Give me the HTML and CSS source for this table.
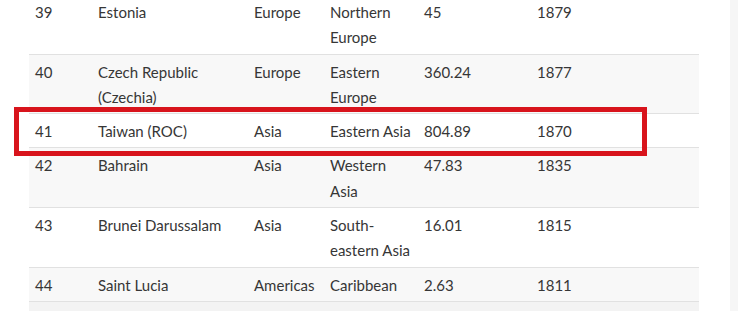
FILE: index.html
```html
<!DOCTYPE html>
<html>
<head>
<meta charset="utf-8">
<link rel="stylesheet" href="styles.css">
</head>
<body>
<div class="page">
  <main class="main">
    <table class="countries">
      <colgroup>
        <col class="c-rank"><col class="c-name"><col class="c-region"><col class="c-sub"><col class="c-density"><col class="c-year">
      </colgroup>
      <tbody>
        <tr><td>39</td><td>Estonia</td><td>Europe</td><td>Northern Europe</td><td>45</td><td>1879</td></tr>
        <tr class="alt"><td>40</td><td>Czech Republic (Czechia)</td><td>Europe</td><td>Eastern Europe</td><td>360.24</td><td>1877</td></tr>
        <tr><td>41</td><td>Taiwan (ROC)</td><td>Asia</td><td>Eastern Asia</td><td>804.89</td><td>1870</td></tr>
        <tr class="alt"><td>42</td><td>Bahrain</td><td>Asia</td><td>Western Asia</td><td>47.83</td><td>1835</td></tr>
        <tr><td>43</td><td>Brunei Darussalam</td><td>Asia</td><td>South-eastern Asia</td><td>16.01</td><td>1815</td></tr>
        <tr class="alt"><td>44</td><td>Saint Lucia</td><td>Americas</td><td>Caribbean</td><td>2.63</td><td>1811</td></tr>
        <tr class="next"><td>&nbsp;</td><td></td><td></td><td></td><td></td><td></td></tr>
      </tbody>
    </table>
    <div class="highlight"></div>
  </main>
  <aside class="edge"></aside>
</div>
</body>
</html>
```

FILE: styles.css
```css
html, body {
  margin: 0;
  padding: 0;
  background: #ffffff;
  overflow: hidden;
}
.page {
  display: flex;
  width: 738px;
  height: 311px;
  overflow: hidden;
}
.main {
  position: relative;
  width: 730px;
  flex: none;
}
.edge {
  flex: 1;
  background: #f6f6f6;
}
.countries {
  margin: -6px 0 0 29px;
  width: 670px;
  table-layout: fixed;
  border-collapse: collapse;
  font-family: "Lato", "Liberation Sans", sans-serif;
  font-size: 15px;
  color: #363636;
}
.c-rank { width: 63px; }
.c-name { width: 156px; }
.c-region { width: 76px; }
.c-sub { width: 94px; }
.c-density { width: 113px; }
.c-year { width: 168px; }
.countries td {
  border-top: 1px solid #e1e1e1;
  padding: 5px 6px 3px;
  line-height: 25.3px;
  vertical-align: top;
}
.countries tr.alt td {
  background: #f8f8f8;
}
.countries tr.next td {
  background: #f3f3f3;
}
.highlight {
  position: absolute;
  left: 14px;
  top: 107px;
  width: 633px;
  height: 49px;
  box-sizing: border-box;
  border: 5px solid #d8141c;
}
```
